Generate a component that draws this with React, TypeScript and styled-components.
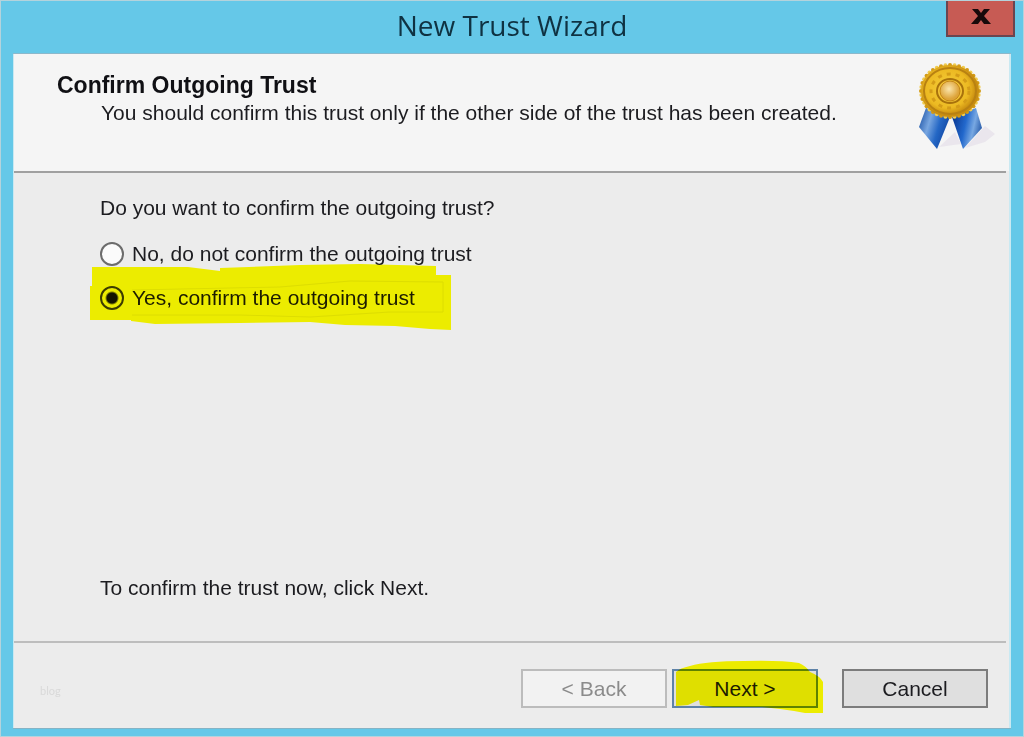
import React, { useState } from "react";
import styled, { createGlobalStyle } from "styled-components";

const GlobalStyle = createGlobalStyle`
  *, *::before, *::after { box-sizing: border-box; }
  body {
    margin: 0;
    font-family: "Liberation Sans", Arial, sans-serif;
    font-size: 21px;
    line-height: 28px;
    color: #1c1c20;
  }
  h1, h2, p { margin: 0; }
`;

const Window = styled.div`
  display: flex;
  flex-direction: column;
  min-height: 100vh;
  padding: 0 12px 8px;
  background: #65c8e8;
  border: 1px solid #b4d3dc;
`;

const TitleBar = styled.header`
  display: grid;
  grid-template-columns: 1fr auto 1fr;
  align-items: start;
  height: 53px;
`;

const Title = styled.h1`
  grid-column: 2;
  padding-top: 4px;
  font-family: "Open Sans", "Noto Sans", sans-serif;
  font-size: 28px;
  font-weight: 400;
  line-height: 40px;
  color: #0f3242;
`;

const CloseButton = styled.button`
  justify-self: end;
  display: grid;
  place-items: center;
  width: 69px;
  height: 36px;
  margin-right: -4px;
  padding: 0 0 3px;
  background: #c75b54;
  border: 2px solid #6a4550;
  border-top: 0;
`;

const Panel = styled.main`
  flex: 1;
  display: flex;
  flex-direction: column;
  background: #ececec;
  border: solid #c9e9f2;
  border-width: 0 2px 0 1px;
  box-shadow: 0 -1px #8cb8cb, 0 1px #85b3c5;
`;

const Rule = styled.hr<{ $dark?: boolean }>`
  flex: none;
  width: auto;
  height: 2px;
  margin: 0 3px 0 0;
  border: 0;
  background: ${(p) => (p.$dark ? "#a0a0a0" : "#bdbdbd")};
`;

const PageHeader = styled.section`
  display: flex;
  justify-content: space-between;
  height: 117px;
  padding: 8px 12px 0 43px;
  background: #f5f5f5;
`;

const Heading = styled.h2`
  padding-top: 9px;
  font-size: 23px;
  font-weight: 700;
  line-height: 28px;
  color: #101014;
`;

const Subheading = styled.p`
  padding-left: 44px;
`;

const Content = styled.form`
  flex: 1;
  display: flex;
  flex-direction: column;
  padding: 21px 86px 39px;
`;

const Options = styled.fieldset`
  display: flex;
  flex-direction: column;
  gap: 16px;
  min-width: 0;
  margin: 0 0 auto;
  padding: 0;
  border: 0;
`;

const Question = styled.legend`
  padding: 0 0 18px;
`;

const Option = styled.label`
  position: relative;
  display: flex;
  align-items: center;
  align-self: flex-start;
  gap: 8px;
`;

const Radio = styled.input`
  appearance: none;
  width: 24px;
  height: 24px;
  margin: 0;
  background: #fbfbfb;
  border: 2px solid #6c6c6c;
  border-radius: 50%;
  &:checked {
    border-color: #3c3c3c;
    background: radial-gradient(circle, #151515 5px, #ececec 7px);
  }
`;

const Marker = styled.svg`
  position: absolute;
  mix-blend-mode: multiply;
  pointer-events: none;
  fill: #ffff00;
`;

const OptionMarker = styled(Marker)`
  left: -10px;
  top: -21px;
`;

const ButtonMarker = styled(Marker)`
  left: 0;
  top: -10px;
`;

const Footer = styled.footer`
  display: flex;
  align-items: center;
  height: 85px;
  padding: 5px 21px 0 26px;
`;

const Watermark = styled.small`
  margin-right: auto;
  padding-top: 6px;
  font-family: Lato, sans-serif;
  font-size: 11px;
  color: #d9d9d9;
`;

const Button = styled.button<{ $primary?: boolean }>`
  width: 146px;
  height: 39px;
  padding: 2px 0 0;
  font: inherit;
  color: #1c1c20;
  background: #dfdfdf;
  border: 2px solid ${(p) => (p.$primary ? "#5e82a8" : "#7c7c7c")};
  &:disabled {
    color: #8b8b8b;
    background: #f2f2f2;
    border-color: #bcbcbc;
  }
`;

const NextSlot = styled.span`
  position: relative;
  display: flex;
  margin: 0 24px 0 5px;
`;

const seal = Array.from({ length: 40 }, (_, i) => {
  const a = (i * Math.PI) / 20;
  return { x: 33 + 29 * Math.cos(a), y: 29 + 26 * Math.sin(a) };
});

const Ribbon = () => (
  <svg width="80" height="96" viewBox="0 0 80 96" role="img" aria-label="Award ribbon">
    <defs>
      <radialGradient id="gold" cx="45%" cy="45%">
        <stop offset="0" stopColor="#f4cd3a" />
        <stop offset=".75" stopColor="#ecb922" />
        <stop offset="1" stopColor="#c98e10" />
      </radialGradient>
      <radialGradient id="centre" cx="45%" cy="40%">
        <stop offset="0" stopColor="#fbe6ae" />
        <stop offset="1" stopColor="#dda338" />
      </radialGradient>
      <linearGradient id="leftTail" x1="0" y1=".3" x2="1" y2=".7">
        <stop offset="0" stopColor="#2a5fae" />
        <stop offset=".3" stopColor="#78a6e0" />
        <stop offset=".6" stopColor="#2467c5" />
        <stop offset="1" stopColor="#0c3e9a" />
      </linearGradient>
      <linearGradient id="rightTail" x1="0" y1=".4" x2="1" y2=".7">
        <stop offset="0" stopColor="#0b3b96" />
        <stop offset=".4" stopColor="#2268cc" />
        <stop offset=".68" stopColor="#78a8e2" />
        <stop offset="1" stopColor="#174b9e" />
      </linearGradient>
    </defs>
    <path d="M22 85L38 70L44 82ZM48 86L68 64L78 72L68 80Z" fill="#e6e0ea" opacity=".7" />
    <path d="M9 46L2 65L20 87L33 55Z" fill="url(#leftTail)" />
    <path d="M35 55L46 87L65 66L59 46Z" fill="url(#rightTail)" />
    {seal.map((p, i) => (
      <circle key={i} cx={p.x} cy={p.y} r="2" fill={i % 2 ? "#f0cb4e" : "#d39b16"} />
    ))}
    <ellipse cx="33" cy="29" rx="29" ry="26" fill="url(#gold)" />
    <ellipse cx="33" cy="29" rx="26" ry="23" fill="none" stroke="#b88112" strokeWidth="2" />
    <ellipse cx="33" cy="29" rx="19" ry="17" fill="none" stroke="#d49c18" strokeWidth="3" strokeDasharray="4 5" />
    <ellipse cx="33" cy="29" rx="13" ry="12" fill="#f3c436" stroke="#a8720c" strokeWidth="2" />
    <circle cx="33" cy="29" r="10" fill="url(#centre)" stroke="#c58718" />
  </svg>
);

export default function App() {
  const [confirm, setConfirm] = useState(true);
  return (
    <>
      <GlobalStyle />
      <Window>
        <TitleBar>
          <Title>New Trust Wizard</Title>
          <CloseButton type="button" aria-label="Close">
            <svg width="20" height="16" viewBox="0 0 20 16" fill="#17090a">
              <path d="M1 0h6l3 4 3-4h6l-6 7 7 8h-7l-3-4-3 4H0l7-8z" />
            </svg>
          </CloseButton>
        </TitleBar>
        <Panel>
          <PageHeader>
            <div>
              <Heading>Confirm Outgoing Trust</Heading>
              <Subheading>
                You should confirm this trust only if the other side of the trust has been created.
              </Subheading>
            </div>
            <Ribbon />
          </PageHeader>
          <Rule $dark />
          <Content>
            <Options>
              <Question>Do you want to confirm the outgoing trust?</Question>
              <Option>
                <Radio type="radio" name="confirm" checked={!confirm} onChange={() => setConfirm(false)} />
                No, do not confirm the outgoing trust
              </Option>
              <Option>
                <Radio type="radio" name="confirm" checked={confirm} onChange={() => setConfirm(true)} />
                Yes, confirm the outgoing trust
                <OptionMarker width="362" height="68" viewBox="0 0 362 68" aria-hidden="true">
                  <path d="M2 4H98L130 8V5L210 2L270 1L346 3V12H361V67L340 66L305 63L255 62L220 59L150 60L65 61L41 58V57H0V23H2Z" />
                  <path d="M42 27L190 24L260 18L353 19V49H300L220 54L150 52H42" fill="none" stroke="#f0f000" />
                </OptionMarker>
              </Option>
            </Options>
            <p>To confirm the trust now, click Next.</p>
          </Content>
          <Rule />
          <Footer>
            <Watermark>blog</Watermark>
            <Button type="button" disabled>&lt; Back</Button>
            <NextSlot>
              <Button type="button" $primary>Next &gt;</Button>
              <ButtonMarker width="152" height="56" viewBox="0 0 152 56" aria-hidden="true">
                <path d="M4 13Q8 9 18 7Q35 2 72 2Q108 1 127 4Q134 7 138 13Q148 17 151 23V54H133L122 52L108 50L90 48H41L28 46L27 41L16 46L4 47Z" />
              </ButtonMarker>
            </NextSlot>
            <Button type="button">Cancel</Button>
          </Footer>
        </Panel>
      </Window>
    </>
  );
}
